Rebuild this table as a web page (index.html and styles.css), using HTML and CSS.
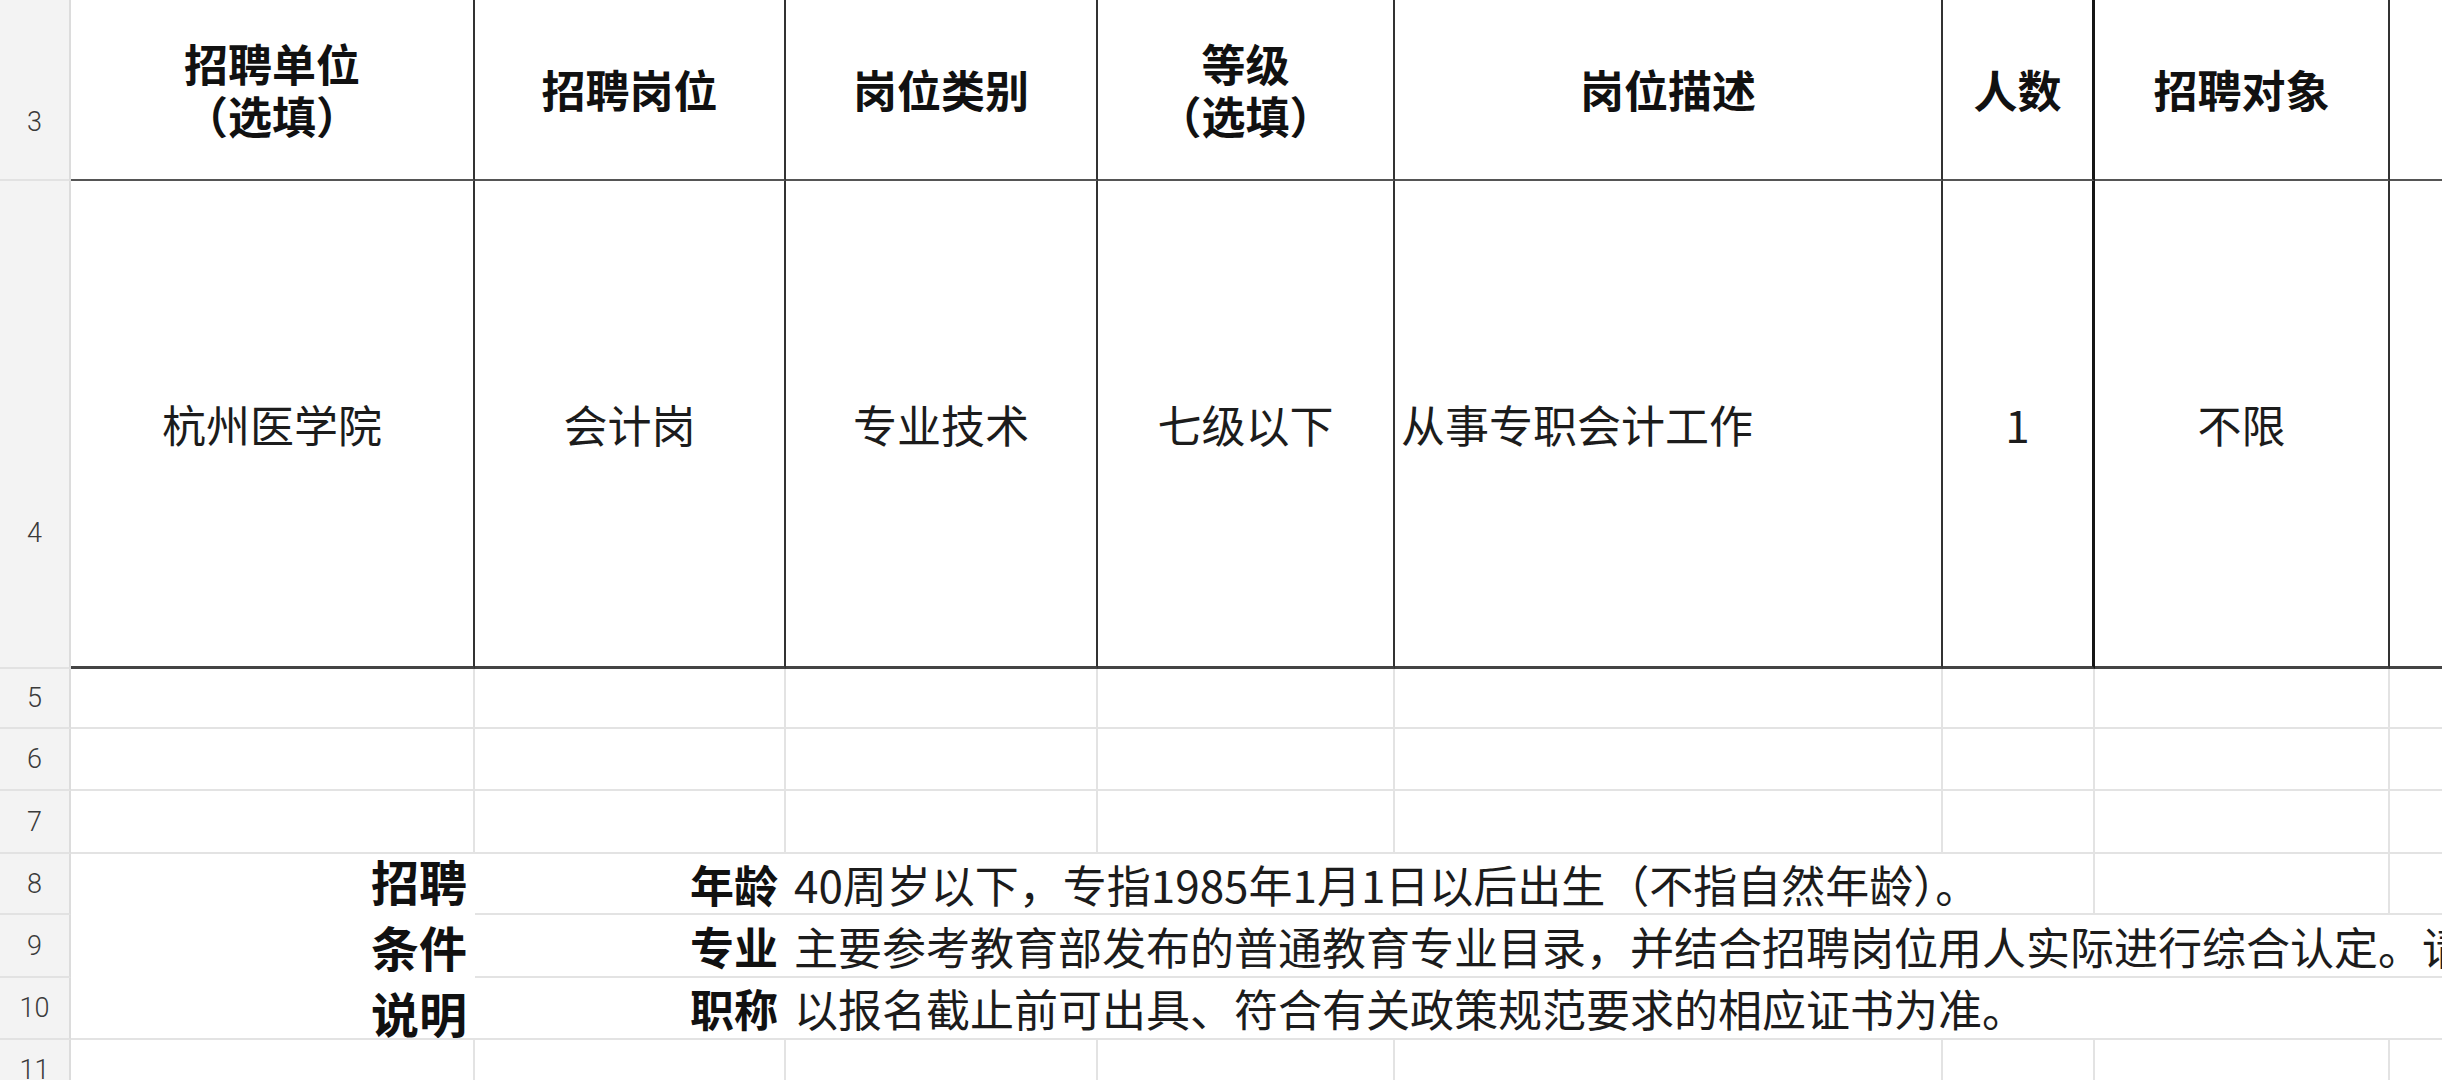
FILE: index.html
```html
<!DOCTYPE html>
<html lang="zh-CN">
<head>
<meta charset="utf-8">
<title>招聘岗位表</title>
<link rel="stylesheet" href="styles.css">
</head>
<body>
<div class="sheet">
  <!-- row 3 -->
  <div class="rh rh-top3"><span>3</span></div>
  <div class="c t hd"><span>招聘单位</span><span class="paren">（选填）</span></div>
  <div class="c t hd">招聘岗位</div>
  <div class="c t hd">岗位类别</div>
  <div class="c t hd"><span>等级</span><span class="paren">（选填）</span></div>
  <div class="c t hd">岗位描述</div>
  <div class="c t hd thick">人数</div>
  <div class="c t hd">招聘对象</div>
  <div class="c t hd last"></div>

  <!-- row 4 -->
  <div class="rh rh-top4"><span>4</span></div>
  <div class="c t r4">杭州医学院</div>
  <div class="c t r4">会计岗</div>
  <div class="c t r4">专业技术</div>
  <div class="c t r4">七级以下</div>
  <div class="c t r4 left">从事专职会计工作</div>
  <div class="c t r4 thick">1</div>
  <div class="c t r4">不限</div>
  <div class="c t r4 last"></div>

  <!-- row 5 -->
  <div class="rh"><span>5</span></div>
  <div class="c g"></div><div class="c g"></div><div class="c g"></div><div class="c g"></div>
  <div class="c g"></div><div class="c g"></div><div class="c g"></div><div class="c g"></div>

  <!-- row 6 -->
  <div class="rh"><span>6</span></div>
  <div class="c g"></div><div class="c g"></div><div class="c g"></div><div class="c g"></div>
  <div class="c g"></div><div class="c g"></div><div class="c g"></div><div class="c g"></div>

  <!-- row 7 -->
  <div class="rh"><span>7</span></div>
  <div class="c g"></div><div class="c g"></div><div class="c g"></div><div class="c g"></div>
  <div class="c g"></div><div class="c g"></div><div class="c g"></div><div class="c g"></div>

  <!-- rows 8-10 -->
  <div class="rh"><span>8</span></div>
  <div class="c g merged-a">
    <div class="cond"><span>招聘</span><span>条件</span><span>说明</span></div>
  </div>
  <div class="c g label">年龄</div>
  <div class="c g text span-cf">40周岁以下，专指1985年1月1日以后出生（不指自然年龄）。</div>
  <div class="c g"></div>
  <div class="c g"></div>

  <div class="rh"><span>9</span></div>
  <div class="c g label">专业</div>
  <div class="c g text span-ch">主要参考教育部发布的普通教育专业目录，并结合招聘岗位用人实际进行综合认定。请</div>

  <div class="rh"><span>10</span></div>
  <div class="c g label">职称</div>
  <div class="c g text span-ch">以报名截止前可出具、符合有关政策规范要求的相应证书为准。</div>

  <!-- row 11 -->
  <div class="rh"><span>11</span></div>
  <div class="c g"></div><div class="c g"></div><div class="c g"></div><div class="c g"></div>
  <div class="c g"></div><div class="c g"></div><div class="c g"></div><div class="c g"></div>
</div>
</body>
</html>
```
FILE: styles.css
```css
html, body {
  margin: 0;
  padding: 0;
  background: #ffffff;
  overflow: hidden;
}

body {
  width: 2442px;
  height: 1080px;
  font-family: "Noto Sans CJK SC", "Noto Sans", sans-serif;
  color: #1c1c1c;
}

.sheet {
  display: grid;
  grid-template-columns: 71px 404px 311px 312px 297px 548px 152px 295px 200px;
  grid-template-rows: 181px 488px 60px 62px 63px 61px 63px 62px 62px;
  width: 2442px;
  height: 1080px;
  overflow: hidden;
}

/* row header column */
.rh {
  box-sizing: border-box;
  background: #f3f3f3;
  border-right: 2px solid #dcdcdc;
  border-bottom: 2px solid #e2e2e2;
  display: flex;
  justify-content: center;
  align-items: center;
  font-family: Roboto, "Noto Sans", sans-serif;
  font-weight: 300;
  font-size: 27px;
  line-height: 32px;
  color: #3a3a3a;
}

.rh-top3 {
  align-items: flex-start;
  padding-top: 106px;
}

.rh-top4 {
  align-items: flex-start;
  padding-top: 336px;
}

/* generic cell */
.c {
  box-sizing: border-box;
  display: flex;
  align-items: center;
  justify-content: center;
  text-align: center;
  font-size: 44px;
  line-height: 54px;
  white-space: nowrap;
  min-width: 0;
}

/* bordered table area (rows 3-4) */
.t {
  border-right: 2px solid #333333;
  border-bottom: 2px solid #555555;
}

.t.r4 {
  border-bottom: 3px solid #444444;
}

.t.thick {
  border-right: 3px solid #161616;
}

.t.last {
  border-right: none;
}

.hd {
  font-weight: 700;
  color: #111111;
  flex-direction: column;
  line-height: 52px;
  padding-bottom: 2px;
}

.paren {
  font-feature-settings: "halt";
}

.left {
  justify-content: flex-start;
  padding-left: 6px;
}

/* light gridline cells */
.g {
  border-right: 2px solid #e3e3e3;
  border-bottom: 2px solid #e3e3e3;
}

.merged-a {
  grid-column: 2;
  grid-row: 6 / 9;
  border-right: none;
  justify-content: flex-end;
  padding-right: 8px;
  overflow: hidden;
}

.cond {
  display: flex;
  flex-direction: column;
  align-items: flex-end;
  font-size: 48px;
  line-height: 66px;
  font-weight: 700;
  color: #111111;
}

.label {
  grid-column: 3;
  justify-content: flex-end;
  padding-right: 8px;
  border-right: none;
  font-weight: 700;
  color: #111111;
}

.text {
  justify-content: flex-start;
  padding-left: 8px;
  text-align: left;
  border-right: none;
}

.span-cf {
  grid-column: 4 / 8;
  border-right: 2px solid #e3e3e3;
}

.span-ch {
  grid-column: 4 / 10;
  overflow: hidden;
}
```
